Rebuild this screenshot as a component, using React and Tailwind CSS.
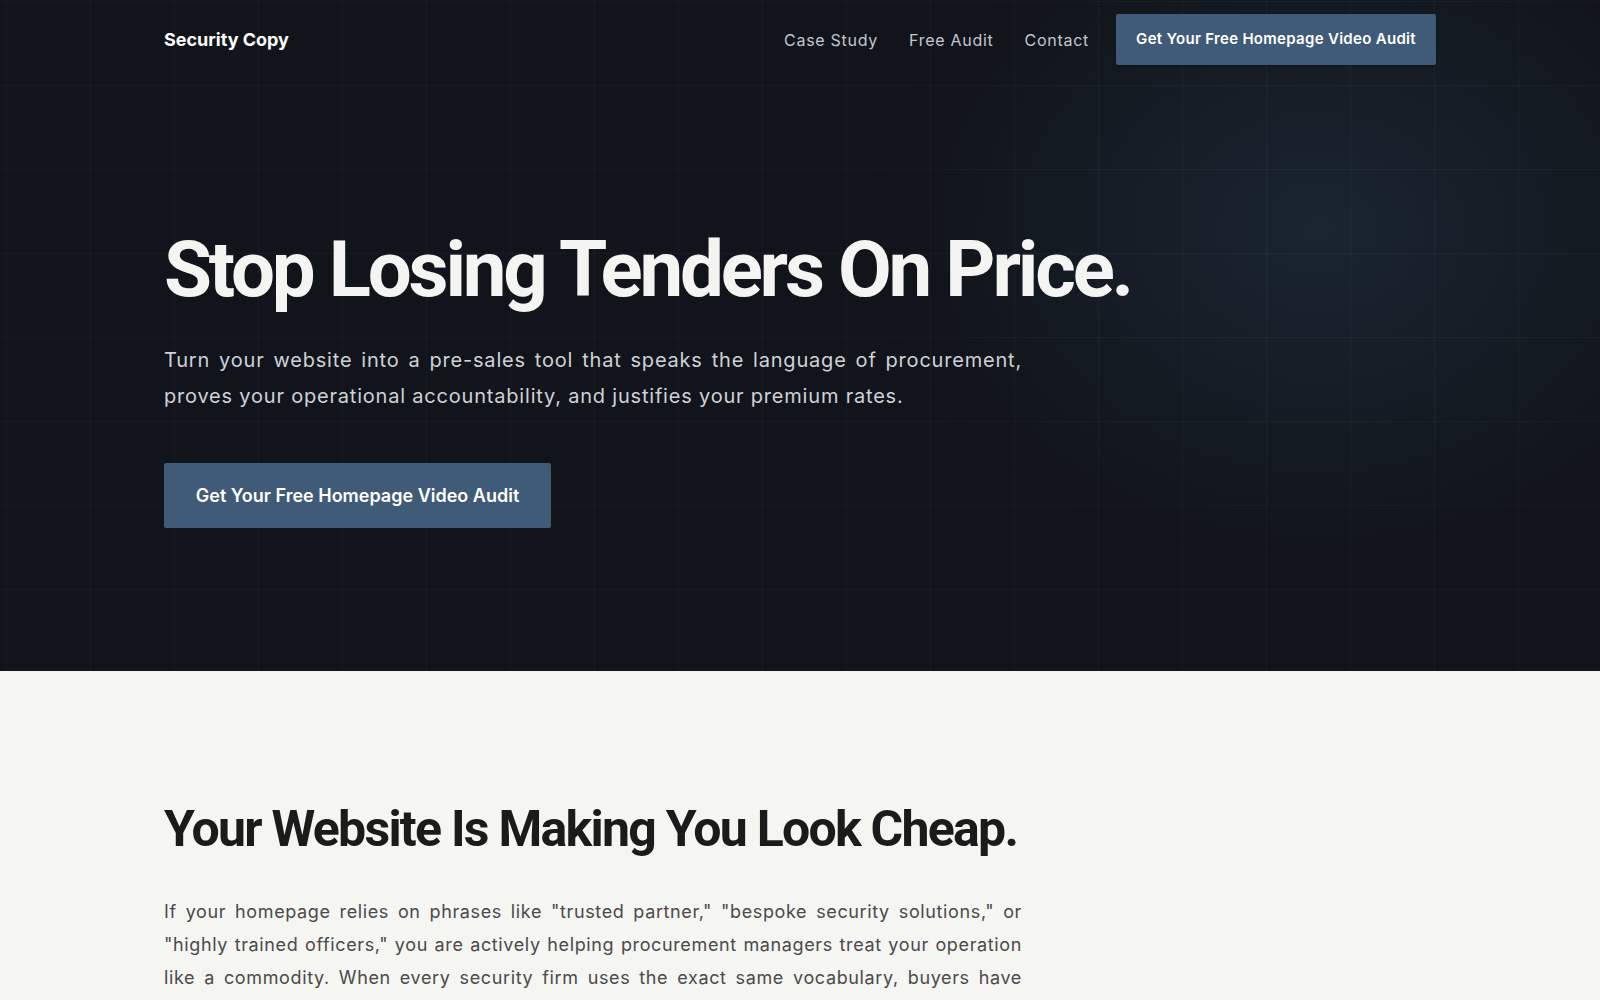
const navLinks = ["Case Study", "Free Audit", "Contact"];

const problemLines = [
  'If your homepage relies on phrases like "trusted partner," "bespoke security solutions," or',
  '"highly trained officers," you are actively helping procurement managers treat your operation',
  "like a commodity. When every security firm uses the exact same vocabulary, buyers have",
];

const Nav = () => {
  return (
    <nav className="flex h-[79px] items-center justify-between">
      <a className="text-[18px] font-bold text-white">Security Copy</a>
      <div className="flex items-center">
        <div className="flex items-center gap-[31px] text-[16px] tracking-[0.045em] text-[#c3c7cc]">
          {navLinks.map((link) => (
            <a key={link}>{link}</a>
          ))}
        </div>
        <a className="ml-[27px] flex h-[51px] w-[320px] items-center justify-center rounded-[2px] bg-[#3f5b77] text-[15px] font-semibold tracking-[0.02em] text-white shadow-[0_1px_2px_rgba(0,0,0,0.3)]">
          Get Your Free Homepage Video Audit
        </a>
      </div>
    </nav>
  );
};

const Hero = () => {
  return (
    <section className="relative overflow-hidden bg-[#11151b]">
      {/* grid + glow behind the content */}
      <div className="pointer-events-none absolute inset-0 bg-[linear-gradient(rgba(255,255,255,0.025)_1px,transparent_1px),linear-gradient(90deg,rgba(255,255,255,0.025)_1px,transparent_1px)] bg-[size:84px_84px] bg-[position:6px_1px]" />
      <div className="pointer-events-none absolute inset-0 bg-[radial-gradient(ellipse_520px_420px_at_1320px_230px,rgba(45,70,95,0.32),transparent_75%)]" />
      <div className="pointer-events-none absolute inset-0 bg-[linear-gradient(rgba(80,110,140,0.07)_1px,transparent_1px),linear-gradient(90deg,rgba(80,110,140,0.07)_1px,transparent_1px)] bg-[size:84px_84px] bg-[position:6px_1px] [mask-image:radial-gradient(ellipse_560px_420px_at_1300px_230px,black,transparent_80%)]" />
      <div className="relative mx-auto max-w-[1272px]">
        <Nav />
        <div className="pb-[143px] pt-[148px]">
          <h1 className="font-['Roboto',Arial,sans-serif] text-[78px] font-bold leading-[1.1] tracking-[-0.041em] text-[#f4f4f2]">
            Stop Losing Tenders On Price.
          </h1>
          <p className="mt-[29px] max-w-[858px] text-justify text-[20px] leading-[36px] tracking-[0.04em] text-[#cfd2d6]">
            Turn your website into a pre-sales tool that speaks the language of procurement, proves your operational accountability, and justifies your premium rates.
          </p>
          <a className="mt-[49px] flex h-[65px] w-[387px] items-center justify-center rounded-[2px] bg-[#3f5b77] text-[18px] font-semibold text-white">
            Get Your Free Homepage Video Audit
          </a>
        </div>
      </div>
    </section>
  );
};

const Problem = () => {
  return (
    <section className="bg-[#f5f5f2]">
      <div className="mx-auto max-w-[1272px] pb-[80px] pt-[128px]">
        <h2 className="font-['Roboto',Arial,sans-serif] text-[50px] font-bold leading-[60px] tracking-[-0.035em] text-[#1b1b1b]">
          Your Website Is Making You Look Cheap.
        </h2>
        <p className="mt-[36px] max-w-[858px] text-justify text-[18px] leading-[33px] tracking-[0.035em] text-[#4a4a4a]">
          {problemLines.map((line) => (
            <span key={line} className="block whitespace-nowrap [text-align-last:justify]">
              {line}
            </span>
          ))}
          no way to separate you from the cheapest bidder, so they compare you on the only thing left: price.
        </p>
      </div>
    </section>
  );
};

export default function App() {
  return (
    <div className="min-h-screen bg-[#f5f5f2] font-['Inter','Noto_Sans',sans-serif] antialiased">
      <Hero />
      <Problem />
    </div>
  );
}
